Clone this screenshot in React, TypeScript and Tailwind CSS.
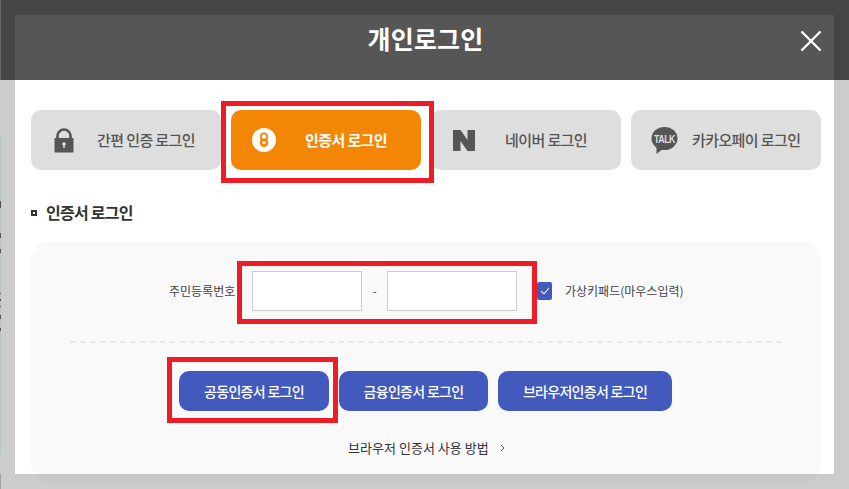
import React from "react";

const font = { fontFamily: '"Noto Sans CJK KR", "Noto Sans", sans-serif' };

function Lock() {
  return (
    <svg width="20" height="25" viewBox="0 0 20 25" className="shrink-0">
      <path d="M3.5 11V8a6.5 6.5 0 0 1 13 0v3" fill="none" stroke="#555" strokeWidth="2.6" />
      <rect x="0.5" y="10" width="19" height="14.5" fill="#555" />
      <circle cx="10" cy="16" r="1.8" fill="#ddd" />
      <rect x="9.2" y="16" width="1.6" height="4" fill="#ddd" />
    </svg>
  );
}

function CertIcon() {
  return (
    <svg width="24" height="24" viewBox="0 0 24 24" className="shrink-0">
      <circle cx="12" cy="12" r="12" fill="#fff" />
      <path d="M9 11.5V8.4a3 3 0 0 1 6 0V11.5" fill="none" stroke="#f38604" strokeWidth="1.8" />
      <circle cx="12" cy="14.6" r="4.3" fill="#f38604" />
      <circle cx="12" cy="14.6" r="1.6" fill="#fff" />
    </svg>
  );
}

function NaverIcon() {
  return (
    <svg width="22" height="21" viewBox="0 0 22 21" className="shrink-0">
      <path d="M0 0H7.5L14.5 10V0H22V21H14.5L7.5 11V21H0Z" fill="#555" />
    </svg>
  );
}

function TalkIcon() {
  return (
    <svg width="27" height="27" viewBox="0 0 27 27" className="shrink-0">
      <ellipse cx="13.5" cy="11.5" rx="13" ry="11.5" fill="#555" />
      <path d="M5.5 19L5.5 27L13 21Z" fill="#555" />
      <text
        x="13.5"
        y="15.5"
        textAnchor="middle"
        fontSize="10.5"
        fontWeight="700"
        fill="#ddd"
        textLength="21"
        lengthAdjust="spacingAndGlyphs"
        style={{ fontFamily: '"Liberation Sans", sans-serif' }}
      >
        TALK
      </text>
    </svg>
  );
}

function Tab({
  icon,
  label,
  active,
  className,
}: {
  icon: React.ReactNode;
  label: string;
  active?: boolean;
  className: string;
}) {
  return (
    <div
      className={`flex h-[60px] w-[190px] shrink-0 items-center rounded-[10px] text-[15px] tracking-[-0.6px] ${
        active ? "bg-[#f38604] font-bold text-white" : "bg-[#dedede] font-medium text-[#555555]"
      } ${className}`}
    >
      {icon}
      <span className="whitespace-nowrap">{label}</span>
    </div>
  );
}

function BlueButton({ label, className }: { label: string; className: string }) {
  return (
    <div
      className={`flex h-[40px] items-center justify-center rounded-[10px] bg-[#425abd] text-[14px] font-medium tracking-[-0.7px] whitespace-nowrap text-white ${className}`}
    >
      {label}
    </div>
  );
}

function Speck({ className }: { className: string }) {
  return <div className={`w-[1px] bg-[#555555] ${className}`} />;
}

export default function App() {
  return (
    <div className="relative flex h-[489px] w-[849px] overflow-hidden bg-white" style={font}>
      <div className="flex w-[1px] shrink-0 flex-col bg-[#cccccc]">
        <div className="h-[80px] bg-[#6a6a6a]" />
        <div className="mt-[54px] h-[320px] bg-[#b4c6b8]">
          <Speck className="mt-[67px] h-[7px]" />
          <Speck className="mt-[25px] h-[5px]" />
          <Speck className="mt-[11px] h-[4px]" />
          <Speck className="mt-[40px] h-[1px]" />
          <Speck className="mt-[5px] h-[2px]" />
          <Speck className="mt-[5px] h-[1px]" />
          <Speck className="mt-[8px] h-[4px]" />
          <Speck className="mt-[9px] h-[3px]" />
        </div>
      </div>

      <div className="flex h-[474px] w-[848px] flex-col">
        <div className="h-[80px] shrink-0 bg-[#444544] pt-[15px] pr-[15px] pl-[14px]">
          <div className="relative flex h-[65px] items-center justify-center bg-[#555655]">
            <h1 className="mb-[20px] ml-[2px] text-[25px] leading-[34px] font-bold tracking-[0.2px] text-white">
              개인로그인
            </h1>
            <svg
              width="22"
              height="22"
              viewBox="0 0 22 22"
              className="absolute top-[15px] right-[12px]"
            >
              <path d="M1.5 1.5L20.5 20.5M20.5 1.5L1.5 20.5" stroke="#fff" strokeWidth="2.4" />
            </svg>
          </div>
        </div>

        <div className="flex min-h-0 flex-1 bg-[#cccccc] pr-[15px] pl-[14px]">
          <div className="flex w-[819px] flex-col bg-white pt-[30px] pr-[13px] pl-[16px]">
            <div className="flex gap-[10px]">
              <Tab icon={<Lock />} label="간편 인증 로그인" className="gap-[23px] pl-[23px]" />
              <Tab
                icon={<CertIcon />}
                label="인증서 로그인"
                active
                className="gap-[29px] pl-[21px]"
              />
              <Tab icon={<NaverIcon />} label="네이버 로그인" className="gap-[30px] pl-[22px]" />
              <Tab icon={<TalkIcon />} label="카카오페이 로그인" className="gap-[14px] pl-[20px]" />
            </div>

            <div className="mt-[31px] mb-[1px] flex h-[21px] items-center text-[16px] font-bold tracking-[-0.75px] text-[#333333]">
              <span className="mt-[2px] mr-[9px] h-[6px] w-[6px] border-[2px] border-[#333333]" />
              인증서 로그인
            </div>

            <div className="mt-[18px] h-[242px] shrink-0 rounded-[20px] bg-[#f9f9f9] px-[39px] pt-[30px]">
              <div className="flex h-[40px] items-center text-[12px] text-[#444444]">
                <span className="mb-[1px] ml-[99px] w-[66px] whitespace-nowrap">주민등록번호</span>
                <div className="ml-[17px] h-[40px] w-[110px] border border-[#cccccc] bg-white" />
                <span className="w-[25px] text-center">-</span>
                <div className="h-[40px] w-[130px] border border-[#cccccc] bg-white" />
                <div className="ml-[20px] flex h-[18px] w-[15px] items-center justify-center rounded-[2px] bg-[#425abd]">
                  <svg width="10" height="8" viewBox="0 0 10 8">
                    <path d="M1 4L4 6.8L9 1" fill="none" stroke="#fff" strokeWidth="1.1" />
                  </svg>
                </div>
                <span className="mb-[1px] ml-[13px] whitespace-nowrap">가상키패드(마우스입력)</span>
              </div>

              <div className="mt-[30px] border-t-2 border-dashed border-[#e8e8e8]" />

              <div className="mt-[28px] ml-[109px] flex gap-[10px]">
                <BlueButton label="공동인증서 로그인" className="w-[150px]" />
                <BlueButton label="금융인증서 로그인" className="w-[149px]" />
                <BlueButton label="브라우저인증서 로그인" className="w-[174px]" />
              </div>

              <div className="mt-[26px] ml-[278px] flex h-[22px] items-center text-[13px] tracking-[0.03px] text-[#333333]">
                <span className="whitespace-nowrap">브라우저 인증서 사용 방법</span>
                <svg width="5" height="8" viewBox="0 0 5 8" className="ml-[11px]">
                  <path d="M1 1L4 4L1 7" fill="none" stroke="#555" strokeWidth="1" />
                </svg>
              </div>
            </div>
          </div>
        </div>
      </div>

      <div className="pointer-events-none absolute inset-x-0 bottom-0 h-[15px] bg-black/20" />

      <div className="pointer-events-none absolute top-[101px] left-[221px] h-[82px] w-[213px] border-[5px] border-[#ee1c25]" />
      <div className="pointer-events-none absolute top-[261px] left-[237px] h-[63px] w-[300px] border-[5px] border-[#ee1c25]" />
      <div className="pointer-events-none absolute top-[357px] left-[167px] h-[66px] w-[171px] border-[5px] border-[#ee1c25]" />
    </div>
  );
}
